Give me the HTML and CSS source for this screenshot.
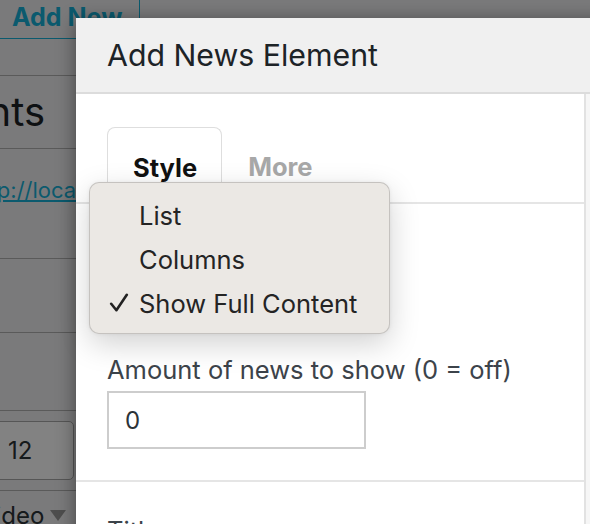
FILE: index.html
```html
<!DOCTYPE html>
<html lang="en">
<head>
<meta charset="utf-8">
<title>Add News Element</title>
<link rel="stylesheet" href="styles.css">
</head>
<body>
  <div class="admin">
    <div class="title-row"><a class="add-new">Add New</a></div>
    <div class="row notice"></div>
    <div class="row heading"><h1 class="page-title">News Elements</h1></div>
    <div class="row link-row"><a class="url">http://localhost/news</a></div>
    <div class="row r5"></div>
    <div class="row r6"></div>
    <div class="row r7"><span class="num-input">12</span></div>
    <div class="row r8"><span class="select-text">Video <span class="tri"></span></span></div>
  </div>

  <div class="overlay"></div>

  <div class="modal">
    <div class="modal-header"><h2 class="modal-title">Add News Element</h2></div>
    <div class="modal-body">
      <div class="main">
        <div class="tabs">
          <div class="tab active">Style</div>
          <div class="tab">More</div>
        </div>
        <div class="section">
          <div class="field">
            <label class="label">Style</label>
            <div class="select">Show Full Content</div>
          </div>
          <div class="field field-amount">
            <label class="label">Amount of news to show (0 = off)</label>
            <div class="input">0</div>
          </div>
        </div>
        <div class="section section-title">
          <div class="field">
            <label class="label">Title</label>
          </div>
        </div>
      </div>
      <div class="side"></div>
    </div>
  </div>

  <div class="menu">
    <div class="menu-item">List</div>
    <div class="menu-item">Columns</div>
    <div class="menu-item checked"><svg class="check" viewBox="0 0 20 20" width="20" height="20"><path d="M2.2 10.8 L7.4 17.2 L17.8 1.8" fill="none" stroke="#222" stroke-width="2.6" stroke-linecap="round" stroke-linejoin="round"/></svg>Show Full Content</div>
  </div>
</body>
</html>
```

FILE: styles.css
```css
* { box-sizing: border-box; }
html, body { margin: 0; padding: 0; }
body {
  width: 590px;
  height: 524px;
  overflow: hidden;
  position: relative;
  background: #f0f0f1;
  font-family: Inter, "Noto Sans", "DejaVu Sans", sans-serif;
  color: #1d2327;
}

/* background admin page */
.admin { width: 590px; }
.title-row {
  height: 39px;
  display: flex;
  align-items: flex-end;
}
.add-new {
  display: flex;
  align-items: flex-end;
  flex: none;
  width: 161px;
  height: 60px;
  margin-left: -21px;
  padding: 0 0 6px 32px;
  border: 1px solid #16b0d8;
  border-radius: 3px;
  color: #16b0d8;
  font-weight: 700;
  font-size: 25px;
  line-height: 30px;
}
.row { border-bottom: 1px solid #b0b0b0; }
.notice { height: 37px; }
.heading {
  height: 72px;
  display: flex;
  justify-content: flex-end;
  width: 45px;
  border-bottom: none;
}
.page-title {
  margin: 0;
  flex: none;
  font-size: 40px;
  font-weight: 400;
  line-height: 72px;
  color: #1d2327;
}
.link-row {
  height: 111px;
  padding-top: 27px;
  border-top: 1px solid #b0b0b0;
}
.url {
  display: block;
  margin-left: -30px;
  font-size: 22px;
  line-height: 28px;
  color: #16b0d8;
  text-decoration: underline;
}
.r5 { height: 74px; }
.r6 { height: 78px; }
.r7 { height: 80px; padding-top: 10px; }
.num-input {
  display: flex;
  align-items: center;
  width: 100px;
  height: 59px;
  margin-left: -26px;
  padding-left: 33px;
  border: 1px solid #aaa;
  border-radius: 5px;
  background: #fff;
  font-size: 24px;
  color: #2c3338;
}
.r8 {
  height: 60px;
  padding-top: 10px;
  border-bottom: none;
}
.select-text {
  display: flex;
  align-items: center;
  gap: 6px;
  margin-left: -21px;
  font-size: 24px;
  color: #2c3338;
}
.tri {
  width: 0; height: 0;
  border-left: 8px solid transparent;
  border-right: 8px solid transparent;
  border-top: 11px solid #999;
}

.overlay {
  position: absolute;
  inset: 0;
  background: rgba(0, 0, 0, 0.49);
}

/* modal */
.modal {
  position: absolute;
  left: 76px;
  top: 18px;
  width: 540px;
  height: 540px;
  background: #fff;
  box-shadow: 0 3px 18px rgba(0, 0, 0, 0.45);
  display: flex;
  flex-direction: column;
}
.modal-header {
  height: 76px;
  flex: none;
  display: flex;
  align-items: center;
  padding-left: 31px;
  background: #f0f0f0;
  border-bottom: 2px solid #dcdcdc;
}
.modal-title {
  margin: 0;
  font-size: 30.3px;
  font-weight: 400;
  color: #1d2327;
}
.modal-body {
  flex: 1;
  display: flex;
}
.main {
  width: 510px;
  flex: none;
  border-right: 2px solid #e2e2e2;
}
.side { flex: 1; background: #f6f6f6; }

.tabs {
  display: flex;
  gap: 0;
  padding: 33px 0 0 31px;
  border-bottom: 2px solid #e5e5e5;
}
.tab {
  height: 75px;
  display: flex;
  align-items: center;
  padding: 2px 24px 0 25px;
  font-size: 25.5px;
  font-weight: 700;
  color: #a8a8a8;
  border: 1px solid transparent;
  border-bottom: none;
  border-radius: 8px 8px 0 0;
}
.tab.active {
  color: #111;
  border-color: #dedede;
  background: #fff;
  margin-bottom: -2px;
  height: 77px;
}

.section {
  padding: 20px 31px 31px;
  border-bottom: 2px solid #e5e5e5;
}
.field { display: flex; flex-direction: column; align-items: flex-start; }
.field-amount { margin-top: 35px; }
.label {
  font-size: 25.5px;
  line-height: 32px;
  color: #3c434a;
}
.select, .input {
  width: 259px;
  height: 58px;
  margin-top: 5px;
  display: flex;
  align-items: center;
  padding-left: 16px;
  border: 2px solid #cdcdcd;
  font-size: 24px;
  color: #2c3338;
}
.section-title { padding-top: 33px; border-bottom: none; }

/* native select popup */
.menu {
  position: absolute;
  left: 89px;
  top: 182px;
  width: 301px;
  height: 152px;
  padding-top: 10px;
  background: #ebe8e4;
  border: 1px solid rgba(0, 0, 0, 0.16);
  border-radius: 10px;
  box-shadow: 0 10px 30px rgba(0, 0, 0, 0.18), 0 0 4px rgba(0, 0, 0, 0.06);
}
.menu-item {
  position: relative;
  height: 44px;
  display: flex;
  align-items: center;
  padding-left: 49px;
  font-size: 25.5px;
  color: #242424;
}
.check {
  position: absolute;
  left: 19px;
  top: 12px;
}
```
